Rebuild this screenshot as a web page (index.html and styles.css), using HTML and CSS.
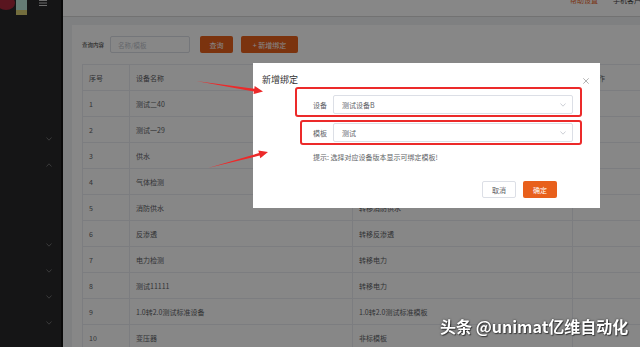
FILE: index.html
```html
<!DOCTYPE html>
<html>
<head>
  <meta charset="utf-8">
  <title>设备模板绑定</title>
  <link rel="stylesheet" href="styles.css">
</head>
<body>
  <div class="layout">
    <div class="sidebar">
      <div class="logo-bar">
        <svg class="logo" width="28" height="16" viewBox="0 0 28 16">
          <ellipse cx="6" cy="3" rx="9" ry="7" fill="#a8283c"/>
          <rect x="16" y="0" width="11" height="10" fill="#bfe8dc"/>
          <rect x="16" y="10" width="11" height="5" fill="#d9cf74"/>
        </svg>
        <svg class="menu-toggle" width="8" height="7" viewBox="0 0 8 7">
          <path d="M0 0.5H8M0 3H8M0 5.5H8" stroke="#cfcfcf" stroke-width="1"/>
        </svg>
      </div>
      <ul class="nav">
        <li class="nav-item"><svg width="6" height="4" viewBox="0 0 6 4"><path d="M0.5 0.5L3 3.2L5.5 0.5" class="chev"/></svg></li>
        <li class="nav-item"><svg width="6" height="4" viewBox="0 0 6 4"><path d="M0.5 3.5L3 0.8L5.5 3.5" class="chev"/></svg></li>
        <li class="nav-sub"></li>
        <li class="nav-item"><svg width="6" height="4" viewBox="0 0 6 4"><path d="M0.5 0.5L3 3.2L5.5 0.5" class="chev"/></svg></li>
        <li class="nav-item"><svg width="6" height="4" viewBox="0 0 6 4"><path d="M0.5 0.5L3 3.2L5.5 0.5" class="chev"/></svg></li>
        <li class="nav-item"><svg width="6" height="4" viewBox="0 0 6 4"><path d="M0.5 0.5L3 3.2L5.5 0.5" class="chev"/></svg></li>
        <li class="nav-item"><svg width="6" height="4" viewBox="0 0 6 4"><path d="M0.5 0.5L3 3.2L5.5 0.5" class="chev"/></svg></li>
      </ul>
    </div>

    <div class="main">
      <div class="header">
        <a href="#" class="help">帮助设置</a>
        <span class="client">手机客户端</span>
      </div>
      <div class="content">
        <div class="card">
          <div class="search">
            <span class="search-label">查询内容</span>
            <input class="search-input" placeholder="名称/模板">
            <a href="#" class="btn btn-primary btn-query">查询</a>
            <a href="#" class="btn btn-primary btn-add">+&nbsp;新增绑定</a>
          </div>

          <table class="list">
            <colgroup>
              <col style="width: 47px">
              <col style="width: 223px">
              <col style="width: 220px">
              <col style="width: 140px">
            </colgroup>
            <thead>
              <tr><th>序号</th><th>设备名称</th><th></th><th class="ops">操作</th></tr>
            </thead>
            <tbody>
              <tr><td>1</td><td>测试二40</td><td></td><td></td></tr>
              <tr><td>2</td><td>测试一29</td><td></td><td></td></tr>
              <tr><td>3</td><td>供水</td><td></td><td></td></tr>
              <tr><td>4</td><td>气体检测</td><td></td><td></td></tr>
              <tr><td>5</td><td>消防供水</td><td>转移消防供水</td><td></td></tr>
              <tr><td>6</td><td>反渗透</td><td>转移反渗透</td><td></td></tr>
              <tr><td>7</td><td>电力检测</td><td>转移电力</td><td></td></tr>
              <tr><td>8</td><td>测试11111</td><td>转移电力</td><td></td></tr>
              <tr><td>9</td><td>1.0转2.0测试标准设备</td><td>1.0转2.0测试标准模板</td><td></td></tr>
              <tr><td>10</td><td>变压器</td><td>非标模板</td><td></td></tr>
            </tbody>
          </table>
        </div>
      </div>
    </div>
  </div>

  <div class="mask"></div>

  <div class="dialog">
    <div class="dialog-header">
      <span class="dialog-title">新增绑定</span>
      <svg class="dialog-close" width="6" height="6" viewBox="0 0 6 6">
        <path d="M0.3 0.3L5.7 5.7M5.7 0.3L0.3 5.7" stroke="#a0a0a0" stroke-width="0.8"/>
      </svg>
    </div>

    <div class="form">
      <div class="form-item">
        <label class="form-label">设备</label>
        <div class="select">
          <span>测试设备B</span>
          <svg width="6" height="4" viewBox="0 0 6 4"><path d="M0.5 0.5L3 3.2L5.5 0.5" class="select-arrow"/></svg>
        </div>
      </div>
      <div class="form-item">
        <label class="form-label">模板</label>
        <div class="select">
          <span>测试</span>
          <svg width="6" height="4" viewBox="0 0 6 4"><path d="M0.5 0.5L3 3.2L5.5 0.5" class="select-arrow"/></svg>
        </div>
      </div>
      <div class="hint">提示: 选择对应设备版本显示可绑定模板!</div>
    </div>

    <div class="dialog-footer">
      <a href="#" class="btn btn-default">取消</a>
      <a href="#" class="btn btn-primary">确定</a>
    </div>

    <!-- annotation boxes -->
    <div class="mark mark-device"></div>
    <div class="mark mark-template"></div>
  </div>

  <svg class="arrows" width="640" height="347" viewBox="0 0 640 347">
    <polygon points="196,81 254.3,88.8 254.7,86.1 263,91.5 253.5,94.1 253.9,91.4" fill="#ec2a2a"/>
    <polygon points="208,168 259,153.1 258.3,150.5 268,152 260.3,158.2 259.6,155.6" fill="#ec2a2a"/>
  </svg>

  <div class="watermark">头条 @unimat亿维自动化</div>
</body>
</html>
```

FILE: styles.css
```css
* {
  box-sizing: border-box;
}

html,
body {
  margin: 0;
  height: 100%;
  overflow: hidden;
}

body {
  font-family: "Noto Sans CJK SC", "Noto Sans", sans-serif;
  color: #666;
  background-color: #f0f1f3;
}

a {
  text-decoration: none;
}

.layout {
  display: flex;
  height: 100vh;
}

/* sidebar */

.sidebar {
  width: 63px;
  flex-shrink: 0;
  background-color: #28282b;
  border-right: 2px solid #121212;
}

.logo-bar {
  height: 16px;
  display: flex;
  align-items: flex-start;
  overflow: hidden;
}

.menu-toggle {
  margin-left: 11px;
}

.nav {
  list-style: none;
  margin: 0;
  padding: 110px 0 0 0;
}

.nav-item {
  height: 26px;
  display: flex;
  justify-content: flex-end;
  align-items: center;
  padding-right: 9px;
}

.nav-sub {
  height: 54px;
}

.chev {
  fill: none;
  stroke: #6e6e6e;
  stroke-width: 1;
}

/* main */

.main {
  flex: 1;
  min-width: 0;
  display: flex;
  flex-direction: column;
  overflow: hidden;
}

.header {
  height: 17px;
  flex-shrink: 0;
  background-color: #fff;
  border-bottom: 1px solid #d8d8d8;
  display: flex;
  justify-content: flex-end;
  align-items: flex-start;
  gap: 15px;
  font-size: 7px;
  overflow: hidden;
}

.header .help,
.header .client {
  margin-top: -5px;
  line-height: 10px;
  white-space: nowrap;
}

.header .help {
  color: #e8601c;
}

.header .client {
  color: #444;
  margin-right: -8px;
}

.content {
  flex: 1;
  padding: 8px 0 0 9px;
  display: flex;
}

.card {
  flex: 1;
  background-color: #fff;
  padding: 11px 10px 0 10px;
  overflow: hidden;
}

.search {
  display: flex;
  align-items: center;
  height: 17px;
}

.search-label {
  width: 28px;
  font-size: 5.5px;
  color: #333;
}

.search-input {
  width: 80px;
  height: 17px;
  margin: 0 10px 0 0;
  padding: 0 0 0 7px;
  border: 1px solid #dcdfe6;
  border-radius: 2px;
  font-family: inherit;
  font-size: 6.5px;
  outline: none;
}

.search-input::placeholder {
  color: #c0c4cc;
}

.btn {
  display: inline-flex;
  align-items: center;
  justify-content: center;
  height: 17px;
  font-size: 7px;
  border-radius: 2px;
  white-space: nowrap;
}

.btn-primary {
  background-color: #e8601c;
  color: #fff;
}

.btn-query {
  width: 33px;
  margin-right: 8px;
}

.btn-add {
  width: 57px;
}

/* table */

.list {
  margin-top: 11px;
  width: 630px;
  table-layout: fixed;
  border-collapse: collapse;
  font-size: 7px;
  color: #606266;
}

.list th,
.list td {
  height: 26px;
  padding: 0 6px;
  text-align: left;
  font-weight: normal;
  white-space: nowrap;
  border: 1px solid #ebedf2;
}

.list th.ops {
  padding-left: 18px;
}

/* dialog */

.mask {
  position: fixed;
  top: 0;
  left: 0;
  right: 0;
  bottom: 0;
  background-color: rgba(0, 0, 0, 0.47);
  z-index: 2;
}

.dialog {
  position: fixed;
  left: 253px;
  top: 63px;
  width: 347px;
  height: 145px;
  padding: 10px 9px;
  background-color: #fff;
  z-index: 3;
}

.dialog-header {
  height: 12px;
  display: flex;
  justify-content: space-between;
  align-items: center;
}

.dialog-title {
  font-size: 9px;
  color: #333;
}

.dialog-close {
  margin-right: 2px;
  margin-top: 4px;
}

.form {
  margin-top: 10px;
}

.form-item {
  display: flex;
  align-items: center;
  height: 19px;
  margin-bottom: 9px;
}

.form-label {
  width: 71px;
  padding-right: 6px;
  text-align: right;
  font-size: 7px;
  color: #606266;
}

.select {
  width: 240px;
  height: 19px;
  display: flex;
  align-items: center;
  justify-content: space-between;
  padding: 0 6px 0 8px;
  border: 1px solid #dcdfe6;
  border-radius: 2px;
  font-size: 7px;
  color: #606266;
}

.select-arrow {
  fill: none;
  stroke: #c0c4cc;
  stroke-width: 0.8;
}

.hint {
  margin-left: 51px;
  font-size: 7px;
  line-height: 12px;
  color: #606266;
}

.dialog-footer {
  margin-top: 18px;
  display: flex;
  justify-content: flex-end;
  gap: 7px;
  padding-right: 34px;
}

.dialog-footer .btn {
  width: 34px;
}

.btn-default {
  background-color: #fff;
  border: 1px solid #dcdfe6;
  color: #606266;
}

.mark {
  position: absolute;
  border: 2px solid #ec2a2a;
  border-radius: 3px;
}

.mark-device {
  left: 42px;
  top: 24px;
  width: 287px;
  height: 30px;
}

.mark-template {
  left: 47px;
  top: 57px;
  width: 282px;
  height: 25px;
}

.arrows {
  position: fixed;
  top: 0;
  left: 0;
  z-index: 4;
}

.watermark {
  position: fixed;
  left: 440px;
  top: 315px;
  z-index: 5;
  font-size: 16px;
  font-weight: 700;
  line-height: 22px;
  color: #fff;
  white-space: nowrap;
  text-shadow: 0 0 2px rgba(0, 0, 0, 0.7), 1px 1px 1px rgba(0, 0, 0, 0.5);
}
```
